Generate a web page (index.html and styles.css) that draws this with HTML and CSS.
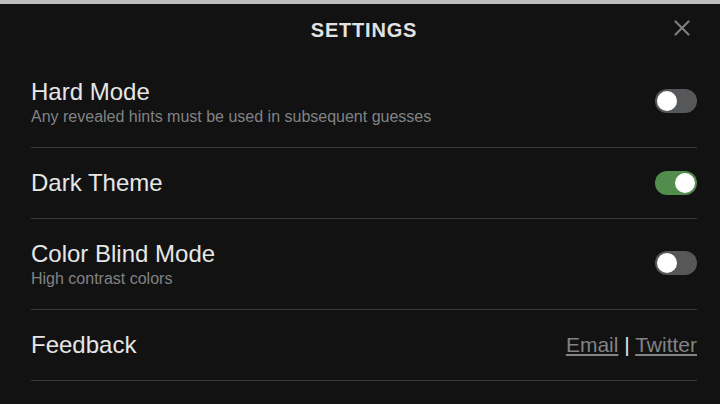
FILE: index.html
```html
<!DOCTYPE html>
<html lang="en">
<head>
    <meta charset="UTF-8">
    <meta name="viewport" content="width=device-width, initial-scale=1.0">
    <title>Settings</title>
    <link rel="stylesheet" href="styles.css">
</head>
<body>

    <div class="top-strip"></div>

    <div class="modal">
        <!-- Header -->
        <div class="modal-header">
            <h1>Settings</h1>
            <button class="close-btn" aria-label="Close">
                <svg viewBox="0 0 24 24" width="24" height="24">
                    <path d="M5.5 5.5 L18.5 18.5 M18.5 5.5 L5.5 18.5" stroke="#7d7e80" stroke-width="2.2" stroke-linecap="round" fill="none"/>
                </svg>
            </button>
        </div>

        <!-- Settings list -->
        <div class="setting with-desc">
            <div class="setting-text">
                <div class="setting-title">Hard Mode</div>
                <div class="setting-desc">Any revealed hints must be used in subsequent guesses</div>
            </div>
            <div class="switch"><span class="knob"></span></div>
        </div>

        <div class="setting">
            <div class="setting-text">
                <div class="setting-title">Dark Theme</div>
            </div>
            <div class="switch checked"><span class="knob"></span></div>
        </div>

        <div class="setting with-desc">
            <div class="setting-text">
                <div class="setting-title">Color Blind Mode</div>
                <div class="setting-desc">High contrast colors</div>
            </div>
            <div class="switch"><span class="knob"></span></div>
        </div>

        <div class="setting">
            <div class="setting-text">
                <div class="setting-title">Feedback</div>
            </div>
            <div class="links">
                <a href="#">Email</a> | <a href="#">Twitter</a>
            </div>
        </div>
    </div>

</body>
</html>
```

FILE: styles.css
```css
body {
    margin: 0;
    font-family: 'Liberation Sans', Arial, sans-serif;
    background-color: #121213;
    color: #e6e6e6;
    height: 404px;
    overflow: hidden;
}

.top-strip {
    height: 4px;
    background-color: #bdbdbd;
}

.modal {
    margin: 0 23px 0 31px;
}

/* Header */
.modal-header {
    position: relative;
    height: 53px;
    display: flex;
    align-items: center;
    justify-content: center;
}

.modal-header h1 {
    margin: 0;
    font-size: 20px;
    font-weight: 700;
    letter-spacing: 0.8px;
    text-transform: uppercase;
    color: #e2e2e2;
}

.close-btn {
    position: absolute;
    right: 3px;
    top: 12px;
    background: none;
    border: none;
    padding: 0;
    cursor: pointer;
    line-height: 0;
}

/* Setting rows */
.setting {
    display: flex;
    justify-content: space-between;
    align-items: center;
    border-bottom: 1px solid #3a3a3c;
    padding: 19px 0;
}

.setting.with-desc {
    padding-bottom: 21px;
}

.setting-title {
    font-size: 24px;
    line-height: 32px;
    color: #e6e6e6;
}

.setting-desc {
    font-size: 16px;
    line-height: 18px;
    color: #818384;
}

/* Toggle switch */
.switch {
    position: relative;
    width: 42px;
    height: 24px;
    border-radius: 12px;
    background-color: #565758;
    flex-shrink: 0;
}

.switch .knob {
    position: absolute;
    top: 2px;
    left: 2px;
    width: 20px;
    height: 20px;
    border-radius: 50%;
    background-color: #fff;
}

.switch.checked {
    background-color: #538d4e;
}

.switch.checked .knob {
    left: 20px;
}

/* Feedback links */
.links {
    font-size: 21px;
    color: #e6e6e6;
}

.links a {
    color: #818384;
}
```
